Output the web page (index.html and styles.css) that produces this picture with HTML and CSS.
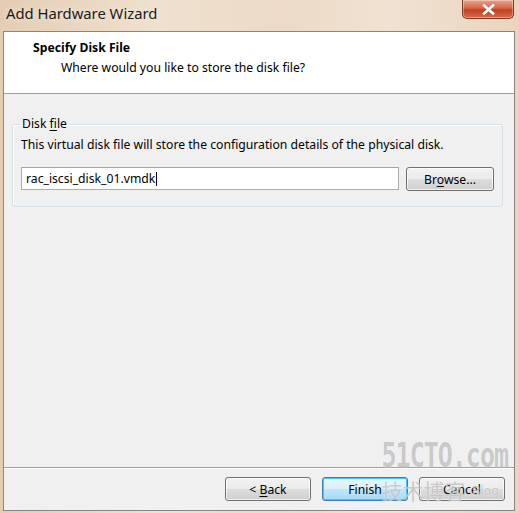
FILE: index.html
```html
<!DOCTYPE html>
<html lang="en">
  <head>
    <meta charset="UTF-8" />
    <title>Add Hardware Wizard</title>
    <link rel="stylesheet" href="styles.css">
  </head>
  <body>
    <div class="window">
      <!-- Title bar -->
      <div class="titlebar">
        <span class="title">Add Hardware Wizard</span>
        <button class="close-btn" aria-label="Close">
          <svg width="13" height="11" viewBox="0 0 13 11">
            <path d="M2 1.5 L11 9.5 M11 1.5 L2 9.5" stroke="#fff" stroke-width="2.6" stroke-linecap="square" />
          </svg>
        </button>
      </div>

      <div class="client">
        <!-- Wizard header -->
        <div class="header">
          <h1>Specify Disk File</h1>
          <p>Where would you like to store the disk file?</p>
        </div>

        <div class="content">
          <fieldset class="group">
            <legend>Disk <u>f</u>ile</legend>
            <p class="hint">This virtual disk file will store the configuration details of the physical disk.</p>
            <div class="file-row">
              <div class="textbox">rac_iscsi_disk_01.vmdk<span class="caret"></span></div>
              <button class="btn browse">Br<u>o</u>wse...</button>
            </div>
          </fieldset>
        </div>

        <div class="footer">
          <button class="btn">&lt; <u>B</u>ack</button>
          <button class="btn default">Finish</button>
          <button class="btn">Cancel</button>
        </div>

        <!-- watermark -->
        <div class="watermark">
          <span class="wm-big">51CTO.com</span>
          <span class="wm-small">技术博客 <em>Blog</em></span>
        </div>
      </div>
    </div>
  </body>
</html>
```

FILE: styles.css
```css
body {
  margin: 0;
  padding: 0;
  font-family: "Noto Sans", "Open Sans", sans-serif;
  font-size: 12.2px;
  color: #000;
  background: #e8d4bf;
}
.window {
  width: 519px;
  height: 513px;
  box-sizing: border-box;
  padding: 0 4px 2px 3px;
  display: flex;
  flex-direction: column;
  background: linear-gradient(90deg, #e4cdb4 0%, #efe0cf 30%, #ecdac6 55%, #f0e2d2 75%, #e9d5bf 100%);
}
.titlebar {
  height: 31px;
  flex: none;
  display: flex;
  align-items: flex-start;
  justify-content: space-between;
}
.title {
  margin: 3px 0 0 3px;
  font-size: 14.8px;
  color: #1a1a1a;
  text-shadow: 0 0 6px #f8efe6;
}
.close-btn {
  margin: 0 1px 0 0;
  width: 52px;
  height: 19px;
  border: 1px solid #7d3a2a;
  border-top: none;
  border-radius: 0 0 5px 5px;
  background: linear-gradient(#e9a28c 0%, #d4674a 45%, #c2401f 55%, #d46a4c 100%);
  display: flex;
  align-items: center;
  justify-content: center;
  padding: 0;
  box-shadow: inset 0 0 0 1px rgba(255, 255, 255, 0.35);
}
.client {
  flex: 1;
  position: relative;
  display: flex;
  flex-direction: column;
  background: #f0f0f0;
  border: 1px solid #8a8580;
}
.header {
  height: 62px;
  flex: none;
  background: #fff;
  border-bottom: 1px solid #a0a0a0;
  padding: 7px 0 0 29px;
  box-sizing: border-box;
}
.header h1 {
  margin: 0;
  font-size: 12.2px;
  font-weight: bold;
  line-height: 17px;
}
.header p {
  margin: 3px 0 0 28px;
  line-height: 17px;
}
.content {
  flex: 1;
  padding: 22px 11px 0 8px;
}
.group {
  margin: 0;
  padding: 0 8px 15px 8px;
  border: 1px solid #d5dfe5;
  border-radius: 3px;
  box-shadow: inset 1px 1px 0 #fff;
}
.group legend {
  padding: 0 2px;
  margin-left: -1px;
  line-height: 16px;
}
.group u,
.btn u {
  text-decoration: underline;
  text-underline-offset: 2px;
}
.hint {
  margin: 4px 0 0 0;
  line-height: 17px;
}
.file-row {
  display: flex;
  align-items: flex-start;
  gap: 7px;
  margin-top: 14px;
}
.textbox {
  flex: 1;
  height: 23px;
  box-sizing: border-box;
  border: 1px solid #abadb3;
  border-top-color: #9fa6b0;
  background: #fff;
  padding: 0 0 0 4px;
  line-height: 21px;
  display: flex;
  align-items: center;
}
.caret {
  display: inline-block;
  width: 1px;
  height: 14px;
  background: #000;
  margin-left: 1px;
}
.btn {
  font-family: inherit;
  font-size: 12.2px;
  color: #000;
  width: 86px;
  height: 24px;
  padding: 0;
  border: 1px solid #707070;
  border-radius: 3px;
  background: linear-gradient(#f2f2f2 0%, #ebebeb 48%, #dddddd 52%, #cfcfcf 100%);
  box-shadow: inset 0 0 0 1px rgba(255, 255, 255, 0.7);
}
.btn.browse {
  width: 88px;
  flex: none;
}
.btn.default {
  border-color: #3c7fb1;
  background: linear-gradient(#eaf6fd 0%, #d9f0fc 48%, #bee6fd 52%, #a7d9f5 100%);
  box-shadow: inset 0 0 0 1px #48c4f2;
}
.footer {
  height: 42px;
  flex: none;
  border-top: 1px solid #a0a0a0;
  box-shadow: inset 0 1px 0 #fff;
  display: flex;
  align-items: center;
  justify-content: flex-end;
  gap: 11px;
  padding: 0 9px 0 0;
}
.watermark {
  position: absolute;
  right: 6px;
  bottom: 5px;
  display: flex;
  flex-direction: column;
  align-items: flex-start;
  pointer-events: none;
  color: rgba(150, 150, 150, 0.5);
  text-shadow: 0 0 1px rgba(255, 255, 255, 0.9);
}
.wm-big {
  font-family: "DejaVu Sans Mono", monospace;
  font-weight: bold;
  font-size: 25px;
  letter-spacing: -1px;
  line-height: 30px;
  transform: scaleY(1.35);
  transform-origin: bottom left;
}
.wm-small {
  font-family: "Noto Sans CJK SC", sans-serif;
  font-size: 21px;
  line-height: 28px;
}
.wm-small em {
  font-style: normal;
  font-size: 12px;
  font-family: "DejaVu Sans", sans-serif;
  margin-left: 2px;
  vertical-align: 4px;
}
```
